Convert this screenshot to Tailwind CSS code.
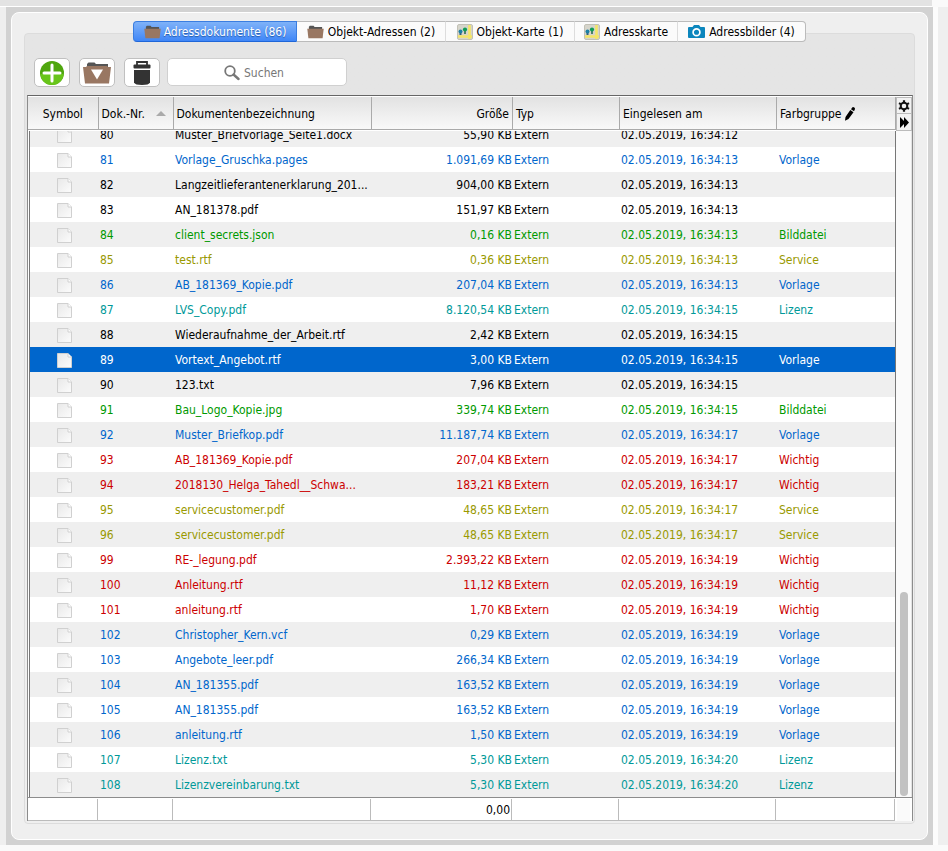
<!DOCTYPE html>
<html lang="de">
<head>
    <meta charset="UTF-8">
    <meta name="viewport" content="width=device-width, initial-scale=1.0">
    <title>Adressdokumente</title>
    <script src="https://cdn.jsdelivr.net/npm/@tailwindcss/browser@4"></script>
</head>
<body class="bg-[#fafafa] font-['DejaVu_Sans_Condensed','DejaVu_Sans',sans-serif] text-[12px] text-black">

    <!-- Icons, die mehrfach vorkommen -->
    <svg class="absolute size-0">
        <linearGradient id="page-fill" x1="0" y1="0" x2="1" y2="1">
            <stop offset="0" stop-color="#e8e8e8"/>
            <stop offset="1" stop-color="#fcfcfc"/>
        </linearGradient>
        <symbol id="folder" viewBox="0 0 18 14">
            <path d="M2 4V1.5L3 .5h4l1 1.2h8V5H2z" fill="#555"/>
            <path d="M.3 3.5h17.4L16.5 13.5h-15z" fill="#997762"/>
        </symbol>
        <symbol id="map" viewBox="0 0 16 16">
            <rect x=".5" y=".5" width="15" height="15" rx="1.5" fill="#d6d5cb" stroke="#c2c1b6"/>
            <path d="M1 12.500h14M12.500 1v14" stroke="#f4e567" stroke-width="2.600" fill="none"/>
            <path d="M2.500 7h2v4h-2z" fill="#33607a"/>
            <circle cx="3.500" cy="7.500" r="2" fill="#1b80a5"/>
            <path d="M7.200 6h1.600v4H7.200z" fill="#2b6b4d"/>
            <circle cx="8" cy="5.500" r="2.100" fill="#0f9d58"/>
        </symbol>
        <symbol id="page" viewBox="0 0 15 15">
            <path d="M.5.5h10.500l3.500 3.500v10.500H.5z" fill="url(#page-fill)" stroke="#d0d0d0"/>
            <path d="M11 .5V4h3.500" fill="#fff" stroke="#d0d0d0"/>
        </symbol>
    </svg>

    <div class="flex min-h-screen flex-col pb-[7px]">
        <div class="mr-4 h-[7px] border-b border-white bg-[#e3e3e3]"></div>

        <div class="flex grow bg-[#efefef]">
            <div class="w-[6px] shrink-0"></div>

            <div class="min-w-0 grow bg-[#d2d2d2] p-[5px]">
                <main class="rounded-lg border border-white bg-[#efefef] px-3 pt-[8px] pb-[15px]">

                    <nav class="relative z-10 flex h-[21px] justify-center">
                        <button class="flex w-[164px] items-center justify-center gap-[3px] rounded-l-[4px] border border-[#3a7de0] border-b-[#1f66d8] bg-linear-to-b from-[#7fb2f8] to-[#3f86f7] text-white [text-shadow:0_1px_1px_#2459a8]">
                            <svg class="h-[14px] w-[17px]"><use href="#folder"/></svg>Adressdokumente (86)
                        </button>
                        <button class="flex w-[149px] items-center justify-center gap-[4px] border-y border-r border-y-[#bbb] border-r-[#ddd] bg-[#fbfbfb]">
                            <svg class="h-[14px] w-[17px]"><use href="#folder"/></svg>Objekt-Adressen (2)
                        </button>
                        <button class="flex w-[129px] items-center justify-center gap-[4px] border-y border-r border-y-[#bbb] border-r-[#ddd] bg-[#fbfbfb]">
                            <svg class="size-[16px]"><use href="#map"/></svg>Objekt-Karte (1)
                        </button>
                        <button class="flex w-[103px] items-center justify-center gap-[4px] border-y border-r border-y-[#bbb] border-r-[#ddd] bg-[#fbfbfb]">
                            <svg class="size-[16px]"><use href="#map"/></svg>Adresskarte
                        </button>
                        <button class="flex w-[128px] items-center justify-center gap-[4px] rounded-r-[4px] border-y border-r border-[#bbb] bg-[#fbfbfb]">
                            <svg class="h-[13px] w-[17px]" viewBox="0 0 17 13">
                                <path d="M1 2h3.500L6 0h5l1.500 2H16a1 1 0 0 1 1 1v9a1 1 0 0 1-1 1H1a1 1 0 0 1-1-1V3a1 1 0 0 1 1-1z" fill="#0c86bd"/>
                                <circle cx="8.500" cy="7.300" r="3.400" fill="none" stroke="#fff" stroke-width="1.700"/>
                            </svg>Adressbilder (4)
                        </button>
                    </nav>

                    <section class="-mt-[9px] rounded-[4px] border border-[#dcdcdc] bg-linear-to-b from-[#e5e5e5] from-15% to-[#efefef] to-30% pt-[24px] pr-px pb-[2px] pl-[2px]">
                        <div class="mb-[8px] flex gap-[9px] px-[7px]">
                            <button aria-label="Hinzufügen" class="flex h-[29px] w-[36px] items-center justify-center rounded-[5px] border border-[#c0c0c0] bg-white">
                                <svg class="size-[24px]" viewBox="0 0 24 24">
                                    <circle cx="12" cy="12" r="12" fill="#4fa60e"/>
                                    <path d="M.5 13a11.500 11 0 0 0 23 0z" fill="#68c51a"/>
                                    <path d="M12 4v16M4 12h16" stroke="#fff" stroke-width="3" stroke-linecap="round"/>
                                </svg>
                            </button>
                            <button aria-label="Ordner öffnen" class="flex h-[29px] w-[36px] items-center justify-center rounded-[5px] border border-[#c0c0c0] bg-white">
                                <svg class="h-[22px] w-[28px]" viewBox="0 0 28 22">
                                    <path d="M4 6V2l1.500-1.500h6L13 2h12v5H4z" fill="#555"/>
                                    <path d="M0 5h3l1-1h20l1 1h3l-2 16.500H2z" fill="#997762"/>
                                    <path d="M8 7.500h12L14 17.500z" fill="#fff"/>
                                </svg>
                            </button>
                            <button aria-label="Löschen" class="flex h-[29px] w-[36px] items-center justify-center rounded-[5px] border border-[#c0c0c0] bg-white">
                                <svg class="h-[24px] w-[18px]" viewBox="0 0 18 24">
                                    <path d="M4 4V1h10v3" fill="none" stroke="#333" stroke-width="1.800"/>
                                    <rect x=".5" y="3.500" width="17" height="4" rx="1" fill="#333"/>
                                    <path d="M1 9h16v12.500Q16 24 9 24t-8-2.500z" fill="#333"/>
                                </svg>
                            </button>
                            <label class="relative -ml-[2px] h-[29px] w-[180px]">
                                <input type="search" aria-label="Suchen" placeholder="Suchen" class="h-[28px] w-full rounded-[5px] border border-[#d0d0d0] bg-white pt-px pl-[76px] placeholder:text-[#777]">
                                <svg class="absolute top-[7px] left-[57px] size-[16px]" viewBox="0 0 16 16" fill="none" stroke="#777">
                                    <circle cx="6" cy="6" r="4.800" stroke-width="1.800"/>
                                    <path d="m9.500 9.500 5 4.500" stroke-width="2.400" stroke-linecap="round"/>
                                </svg>
                            </label>
                        </div>

                        <div class="border-x border-t border-x-[#8c8c8c] border-t-[#666] bg-white">
                            <!-- Kopfzeile -->
                            <div class="flex pt-px">
                                <table class="h-[33px] min-w-0 grow table-fixed border-b border-[#aaa] bg-linear-to-b from-[#e2e2e2] to-[#fafafa]">
                                    <colgroup><col class="w-[70px]"><col class="w-[75px]"><col><col class="w-[141px]"><col class="w-[107px]"><col class="w-[157px]"><col class="w-[119px]"></colgroup>
                                    <thead>
                                        <tr class="text-left [&>th]:border-r [&>th]:border-[#aaa] [&>th]:px-[3px] [&>th]:pt-px [&>th]:font-normal">
                                            <th class="text-center">Symbol</th>
                                            <th><span class="flex items-center justify-between">Dok.-Nr.<svg class="mr-[4px] h-[5px] w-[10px]" viewBox="0 0 10 5"><path d="M0 5 5 0l5 5z" fill="#aaa"/></svg></span></th>
                                            <th>Dokumentenbezeichnung</th>
                                            <th class="text-right">Größe</th>
                                            <th>Typ</th>
                                            <th>Eingelesen am</th>
                                            <th><span class="flex items-center gap-[3px]">Farbgruppe<svg class="h-[14px] w-[10px]" viewBox="0 0 10 14"><path d="M0 13.800.5 10 5.300 3l3.200 2.200L3.500 12zM6 2.200 7.200.5Q8-.3 9.300.6q1 .9.600 1.700L9 4.300z" fill="#000"/></svg></span></th>
                                        </tr>
                                    </thead>
                                </table>
                                <div class="flex w-[16px] shrink-0 flex-col">
                                    <button aria-label="Einstellungen" class="flex h-[17px] items-center justify-center border border-[#bbb] bg-[#f2f2f2]">
                                        <svg class="size-[12px]" viewBox="0 0 12 12" fill="none" stroke="#111">
                                            <circle cx="6" cy="6" r="3.300" stroke-width="2"/>
                                            <path d="M6 .3v2M6 9.700v2M1 3.100l1.800 1M9.200 7.900l1.800 1M1 8.900l1.800-1M9.200 4.100l1.800-1" stroke-width="2.200"/>
                                        </svg>
                                    </button>
                                    <button aria-label="Weitere Spalten" class="flex h-[17px] items-center justify-center border border-t-0 border-[#bbb] bg-[#f2f2f2]">
                                        <svg class="h-[11px] w-[9px]" viewBox="0 0 9 11"><path d="M0 0 4 4V0l5 5.500L4 11V7l-4 4z" fill="#000"/></svg>
                                    </button>
                                </div>
                            </div>

                            <!-- Dokumentliste -->
                            <div class="flex overflow-hidden border-b border-[#8c8c8c]">
                                <div class="ml-px min-w-0 grow overflow-hidden border-x border-[#777]">
                                    <table class="-mt-[9px] w-full table-fixed">
                                        <colgroup><col class="w-[68px]"><col class="w-[75px]"><col><col class="w-[141px]"><col class="w-[107px]"><col class="w-[157px]"><col class="w-[119px]"></colgroup>
                                        <tbody id="dokumente"></tbody>
                                    </table>
                                </div>
                                <div class="flex w-[16px] shrink-0 flex-col items-center justify-end border-r border-[#e2e2e2] bg-[#fafafa] pb-px">
                                    <div class="h-[204px] w-[8px] rounded-full bg-[#c2c2c2]"></div>
                                </div>
                            </div>

                            <!-- Summenzeile -->
                            <div class="flex pt-px">
                                <table class="h-[22px] min-w-0 grow table-fixed border-b border-[#bbb]">
                                    <colgroup><col class="w-[69px]"><col class="w-[75px]"><col><col class="w-[141px]"><col class="w-[107px]"><col class="w-[157px]"><col class="w-[119px]"></colgroup>
                                    <tfoot>
                                        <tr class="[&>td]:border-r [&>td]:border-[#bbb] [&>td]:px-[1px]">
                                            <td></td><td></td><td></td><td class="text-right">0,00</td><td></td><td></td><td></td>
                                        </tr>
                                    </tfoot>
                                </table>
                                <div class="w-[17px] shrink-0 border-x-2 border-white bg-[#fafafa]"></div>
                            </div>
                        </div>
                    </section>
                </main>
            </div>

            <div class="w-[15px] shrink-0 border-l-[5px] border-[#fcfcfc]"></div>
        </div>
    </div>

    <script>
        // Nr., Bezeichnung, Größe, Uhrzeit, Farbgruppe
        const dokumente = [
            ["80", "Muster_Briefvorlage_Seite1.docx", "55,90", "16:34:12", ""],
            ["81", "Vorlage_Gruschka.pages", "1.091,69", "16:34:13", "Vorlage"],
            ["82", "Langzeitlieferantenerklarung_201...", "904,00", "16:34:13", ""],
            ["83", "AN_181378.pdf", "151,97", "16:34:13", ""],
            ["84", "client_secrets.json", "0,16", "16:34:13", "Bilddatei"],
            ["85", "test.rtf", "0,36", "16:34:13", "Service"],
            ["86", "AB_181369_Kopie.pdf", "207,04", "16:34:13", "Vorlage"],
            ["87", "LVS_Copy.pdf", "8.120,54", "16:34:15", "Lizenz"],
            ["88", "Wiederaufnahme_der_Arbeit.rtf", "2,42", "16:34:15", ""],
            ["89", "Vortext_Angebot.rtf", "3,00", "16:34:15", "Vorlage"],
            ["90", "123.txt", "7,96", "16:34:15", ""],
            ["91", "Bau_Logo_Kopie.jpg", "339,74", "16:34:15", "Bilddatei"],
            ["92", "Muster_Briefkop.pdf", "11.187,74", "16:34:17", "Vorlage"],
            ["93", "AB_181369_Kopie.pdf", "207,04", "16:34:17", "Wichtig"],
            ["94", "2018130_Helga_Tahedl__Schwa...", "183,21", "16:34:17", "Wichtig"],
            ["95", "servicecustomer.pdf", "48,65", "16:34:17", "Service"],
            ["96", "servicecustomer.pdf", "48,65", "16:34:17", "Service"],
            ["99", "RE-_legung.pdf", "2.393,22", "16:34:19", "Wichtig"],
            ["100", "Anleitung.rtf", "11,12", "16:34:19", "Wichtig"],
            ["101", "anleitung.rtf", "1,70", "16:34:19", "Wichtig"],
            ["102", "Christopher_Kern.vcf", "0,29", "16:34:19", "Vorlage"],
            ["103", "Angebote_leer.pdf", "266,34", "16:34:19", "Vorlage"],
            ["104", "AN_181355.pdf", "163,52", "16:34:19", "Vorlage"],
            ["105", "AN_181355.pdf", "163,52", "16:34:19", "Vorlage"],
            ["106", "anleitung.rtf", "1,50", "16:34:19", "Vorlage"],
            ["107", "Lizenz.txt", "5,30", "16:34:20", "Lizenz"],
            ["108", "Lizenzvereinbarung.txt", "5,30", "16:34:20", "Lizenz"]
        ];

        const farben = {
            "": "text-black",
            "Vorlage": "text-[#0066cc]",
            "Bilddatei": "text-[#009900]",
            "Service": "text-[#999900]",
            "Lizenz": "text-[#009999]",
            "Wichtig": "text-[#cc0000]"
        };

        const ausgewaehlt = "89";

        document.getElementById('dokumente').innerHTML = dokumente.map(([nr, name, groesse, zeit, gruppe]) => {
            const farbe = nr === ausgewaehlt ? 'bg-[#0066cc] text-white' : 'odd:bg-[#efefef] even:bg-white ' + farben[gruppe];
            return `<tr class="h-[25px] whitespace-nowrap ${farbe}">
                <td class="pt-[2px]"><svg class="mx-auto size-[15px]"><use href="#page"/></svg></td>
                <td class="pl-[2px]">${nr}</td>
                <td class="truncate pl-[2px]">${name}</td>
                <td class="text-right">${groesse} KB</td>
                <td class="pl-[2px]">Extern</td>
                <td class="pl-[2px]">02.05.2019, ${zeit}</td>
                <td class="pl-[3px]">${gruppe}</td>
            </tr>`;
        }).join('');
    </script>
</body>
</html>
